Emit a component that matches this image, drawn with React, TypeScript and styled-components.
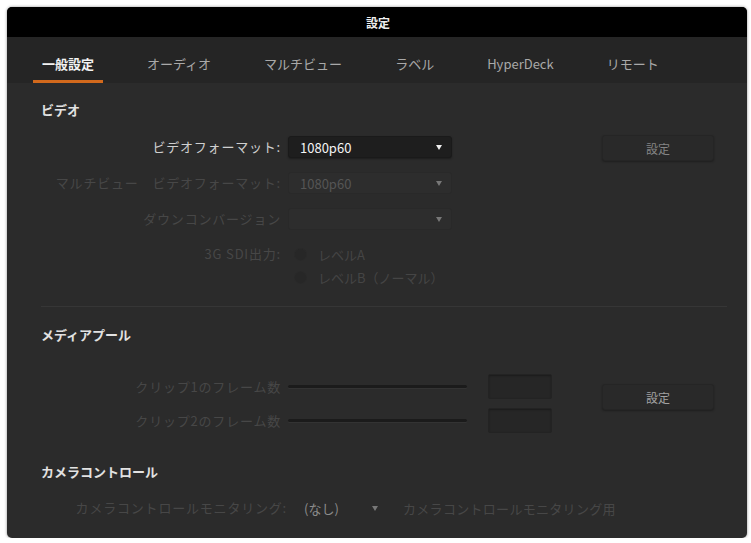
import styled, { createGlobalStyle } from "styled-components";

const GlobalStyle = createGlobalStyle`
  html, body {
    margin: 0;
    padding: 0;
    background: #ffffff;
  }
  body {
    font-family: "Noto Sans CJK JP", "Noto Sans", "Liberation Sans", sans-serif;
  }
  * {
    box-sizing: border-box;
  }
`;

const tabs = ["一般設定", "オーディオ", "マルチビュー", "ラベル", "HyperDeck", "リモート"];

const Window = styled.div`
  margin: 7px 0 0 7px;
  width: 740px;
  height: 531px;
  background: #2b2b2b;
  border-radius: 5px;
  overflow: hidden;
  display: flex;
  flex-direction: column;
  box-shadow: 0 0 3px rgba(0, 0, 0, 0.45);
`;

const TitleBar = styled.div`
  height: 30px;
  flex-shrink: 0;
  background: #000000;
  color: #efefef;
  font-size: 12px;
  font-weight: 700;
  display: flex;
  align-items: center;
  justify-content: center;
  padding-left: 2px;
`;

const TabBar = styled.div`
  display: flex;
  gap: 35px;
  padding-left: 26px;
  height: 46px;
  flex-shrink: 0;
  background: #252525;
`;

const Tab = styled.div<{ $active?: boolean }>`
  padding: 18px 9px 7px;
  font-size: 13px;
  line-height: 18px;
  font-weight: ${(p) => (p.$active ? 700 : 400)};
  color: ${(p) => (p.$active ? "#f2f2f2" : "#a9a9a9")};
  border-bottom: 3px solid ${(p) => (p.$active ? "#d2691c" : "transparent")};
  white-space: nowrap;
`;

const Content = styled.div`
  padding: 18px 20px 0 34px;
  display: flex;
  flex-direction: column;
`;

const SectionHeading = styled.div`
  font-size: 13px;
  line-height: 18px;
  font-weight: 700;
  color: #e2e2e2;
`;

const SectionBody = styled.div<{ $top: number }>`
  display: flex;
  align-items: flex-start;
  margin-top: ${(p) => p.$top}px;
`;

const FormGrid = styled.div`
  display: grid;
  grid-template-columns: 240px 164px;
  column-gap: 7px;
  row-gap: 14px;
  align-items: center;
`;

const Label = styled.div<{ $dim?: boolean; $alignTop?: boolean }>`
  text-align: right;
  font-size: 13px;
  line-height: 20px;
  letter-spacing: 0.8px;
  white-space: nowrap;
  color: ${(p) => (p.$dim ? "#474747" : "#cfcfcf")};
  align-self: ${(p) => (p.$alignTop ? "start" : "center")};
`;

const Select = styled.div<{ $disabled?: boolean; $flat?: boolean; $width?: number }>`
  height: 22px;
  width: ${(p) => (p.$width ? `${p.$width}px` : "100%")};
  display: flex;
  align-items: center;
  justify-content: space-between;
  padding: 0 9px 0 ${(p) => (p.$flat ? 15 : 11)}px;
  border-radius: 3px;
  font-size: 13px;
  color: ${(p) => (p.$disabled ? "#555555" : p.$flat ? "#8c8c8c" : "#f4f4f4")};
  background: ${(p) => (p.$flat ? "transparent" : p.$disabled ? "#2d2d2d" : "#1e1e1e")};
  border: 1px solid ${(p) => (p.$flat ? "transparent" : p.$disabled ? "#292929" : "#1a1a1a")};
  box-shadow: ${(p) => (p.$disabled || p.$flat ? "none" : "0 1px 2px rgba(0,0,0,0.35)")};
`;

const Arrow = styled.span<{ $dim?: boolean }>`
  width: 0;
  height: 0;
  border-left: 3.5px solid transparent;
  border-right: 3.5px solid transparent;
  border-top: 5px solid ${(p) => (p.$dim ? "#777777" : "#f0f0f0")};
`;

const RadioGroup = styled.div`
  display: flex;
  flex-direction: column;
  gap: 3px;
`;

const RadioItem = styled.div`
  height: 20px;
  display: flex;
  align-items: center;
  gap: 11px;
  padding-left: 6px;
  font-size: 13px;
  color: #454545;
  white-space: nowrap;
`;

const RadioDot = styled.span`
  width: 13px;
  height: 13px;
  border-radius: 50%;
  background: #272727;
  border: 1px solid #2a2a2a;
  flex-shrink: 0;
`;

const SetButton = styled.div<{ $left: number; $top: number; $bright?: boolean }>`
  width: 112px;
  height: 26px;
  margin-left: ${(p) => p.$left}px;
  margin-top: ${(p) => p.$top}px;
  display: flex;
  align-items: center;
  justify-content: center;
  font-size: 12px;
  color: ${(p) => (p.$bright ? "#a2a2a2" : "#858585")};
  background: #292929;
  border: 1px solid #252525;
  border-radius: 3px;
  box-shadow: 0 1px 2px rgba(0, 0, 0, 0.3);
  flex-shrink: 0;
`;

const Separator = styled.div`
  height: 1px;
  background: #363636;
  margin: 19px 0 19px;
`;

const MediaGrid = styled.div`
  display: grid;
  grid-template-columns: 240px 179px 78px;
  grid-auto-rows: 25px;
  column-gap: 7px;
  row-gap: 9px;
  align-items: center;
`;

const SliderTrack = styled.div`
  height: 3px;
  border-radius: 2px;
  background: #1b1b1b;
  box-shadow: 0 1px 0 #333333;
`;

const NumberBox = styled.div`
  justify-self: end;
  width: 64px;
  height: 25px;
  background: #262626;
  border: 1px solid #232323;
  border-radius: 2px;
  box-shadow: inset 0 1px 2px rgba(0, 0, 0, 0.3);
`;

const CameraRow = styled.div`
  display: flex;
  align-items: center;
  margin-top: 16px;
`;

const CameraLabel = styled(Label)`
  width: 246px;
  flex-shrink: 0;
  margin-right: 1px;
`;

const HelperText = styled.span`
  margin-left: 15px;
  font-size: 13px;
  letter-spacing: 0.3px;
  color: #474747;
  white-space: nowrap;
`;

export default function App() {
  return (
    <>
      <GlobalStyle />
      <Window>
        <TitleBar>設定</TitleBar>
        <TabBar>
          {tabs.map((t, i) => (
            <Tab key={t} $active={i === 0}>
              {t}
            </Tab>
          ))}
        </TabBar>

        <Content>
          <SectionHeading>ビデオ</SectionHeading>
          <SectionBody $top={17}>
            <FormGrid>
              <Label>ビデオフォーマット:</Label>
              <Select>
                1080p60
                <Arrow />
              </Select>

              <Label $dim>マルチビュー　ビデオフォーマット:</Label>
              <Select $disabled>
                1080p60
                <Arrow $dim />
              </Select>

              <Label $dim>ダウンコンバージョン</Label>
              <Select $disabled>
                <span />
                <Arrow $dim />
              </Select>

              <Label $dim $alignTop>
                3G SDI出力:
              </Label>
              <RadioGroup>
                <RadioItem>
                  <RadioDot />
                  レベルA
                </RadioItem>
                <RadioItem>
                  <RadioDot />
                  レベルB（ノーマル）
                </RadioItem>
              </RadioGroup>
            </FormGrid>
            <SetButton $left={150} $top={-1}>
              設定
            </SetButton>
          </SectionBody>

          <Separator />

          <SectionHeading>メディアプール</SectionHeading>
          <SectionBody $top={30}>
            <MediaGrid>
              <Label $dim>クリップ1のフレーム数</Label>
              <SliderTrack />
              <NumberBox />

              <Label $dim>クリップ2のフレーム数</Label>
              <SliderTrack />
              <NumberBox />
            </MediaGrid>
            <SetButton $left={50} $top={10} $bright>
              設定
            </SetButton>
          </SectionBody>

          <SectionBody $top={30}>
            <SectionHeading>カメラコントロール</SectionHeading>
          </SectionBody>
          <CameraRow>
            <CameraLabel $dim>カメラコントロールモニタリング:</CameraLabel>
            <Select $flat $width={100}>
              (なし)
              <Arrow $dim />
            </Select>
            <HelperText>カメラコントロールモニタリング用</HelperText>
          </CameraRow>
        </Content>
      </Window>
    </>
  );
}
